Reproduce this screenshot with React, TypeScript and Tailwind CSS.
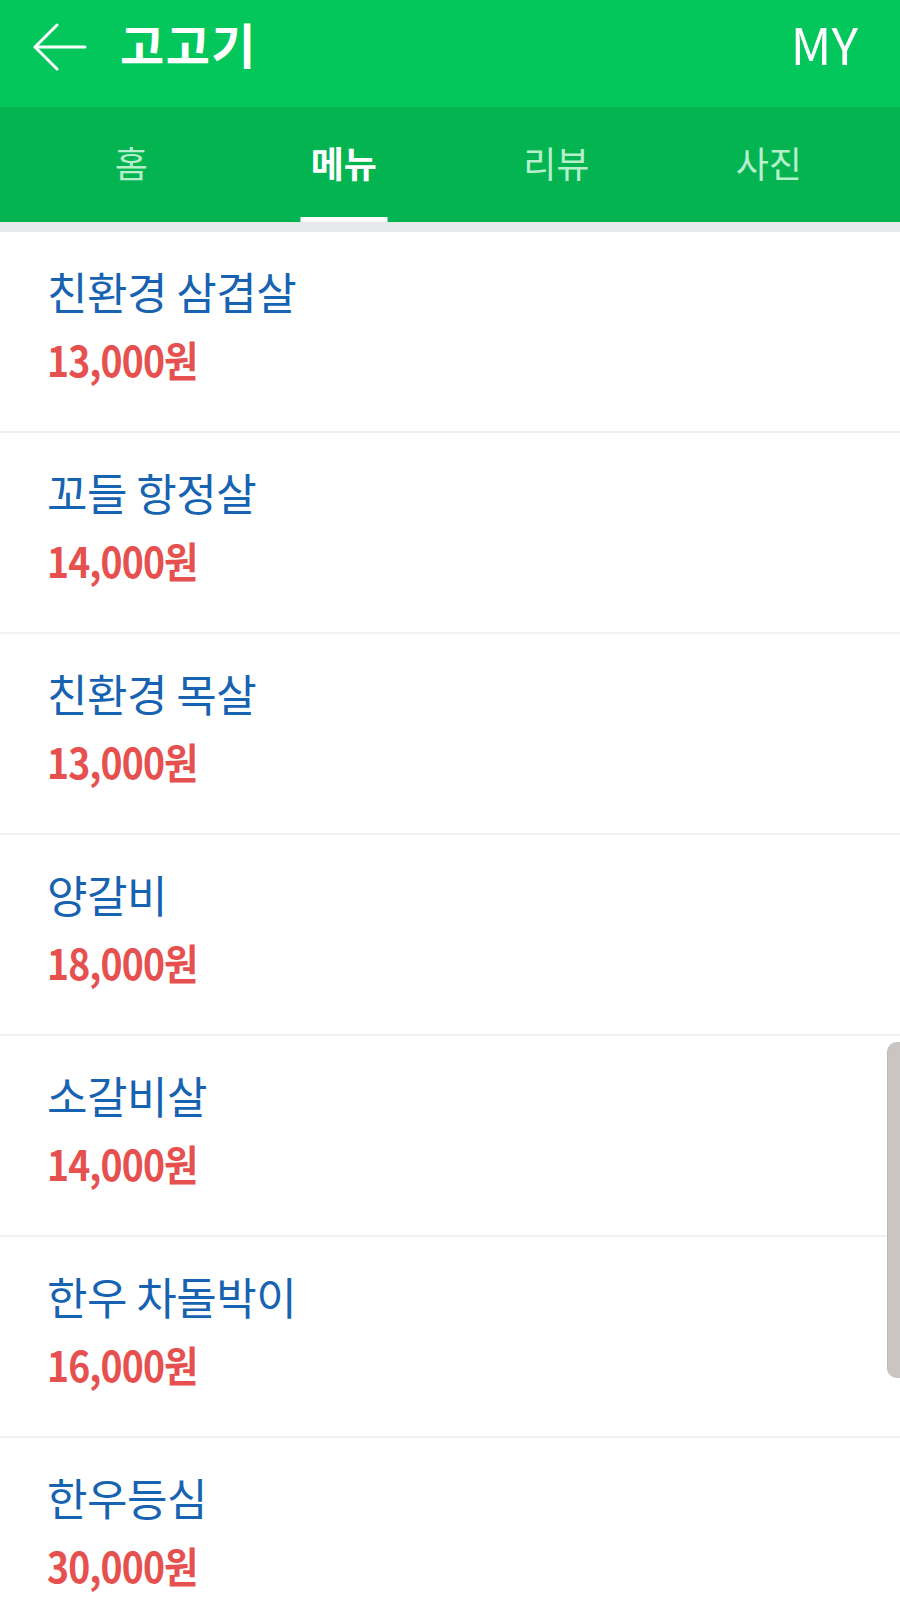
import React from "react";

const items = [
  { name: "친환경 삼겹살", price: "13,000원" },
  { name: "꼬들 항정살", price: "14,000원" },
  { name: "친환경 목살", price: "13,000원" },
  { name: "양갈비", price: "18,000원" },
  { name: "소갈비살", price: "14,000원" },
  { name: "한우 차돌박이", price: "16,000원" },
  { name: "한우등심", price: "30,000원" },
];

const font = { fontFamily: '"Noto Sans CJK KR", "Noto Sans", sans-serif' };

export default function App() {
  return (
    <div className="relative w-[900px] h-[1607px] overflow-hidden bg-white" style={font}>
      <header className="h-[107px] bg-[#03c75a] flex items-center pl-[33px] pr-[42px] pb-[22px]">
        <svg className="mt-[8px]" width="54" height="48" viewBox="0 0 54 48" fill="none" stroke="white" strokeWidth="3" strokeLinecap="round" strokeLinejoin="round">
          <path d="M52 24H3" />
          <path d="M24 2L2 24l22 22" />
        </svg>
        <div className="ml-[33px] text-white text-[48px] font-bold leading-none tracking-[1.5px]">고고기</div>
        <div className="ml-auto text-white text-[50px] font-normal leading-none">MY</div>
      </header>
      <nav className="h-[115px] bg-[#03b451] grid grid-cols-4 px-[25px]">
        {["홈", "메뉴", "리뷰", "사진"].map((t, i) => (
          <div key={t} className="relative flex items-center justify-center pb-[6px]">
            <span
              className={
                i === 1
                  ? "text-white text-[36px] font-bold leading-none"
                  : "text-[#b6efcb] text-[36px] font-normal leading-none"
              }
            >
              {t}
            </span>
            {i === 1 && <div className="absolute bottom-0 left-1/2 -translate-x-1/2 w-[87px] h-[5px] bg-white" />}
          </div>
        ))}
      </nav>
      <div className="h-[10px] bg-[#e6eaeb]" />
      <ul>
        {items.map((it) => (
          <li key={it.name} className="h-[201px] border-b-2 border-[#f1f1f1] pl-[47px] pt-[33px] flex flex-col items-start">
            <div className="text-[#1763b2] text-[44px] font-normal leading-[52px] tracking-[-0.5px]">{it.name}</div>
            <div className="mt-[18px] text-[#e6514f] text-[42px] font-bold leading-[48px] tracking-[-1px] scale-x-[0.89] origin-left">{it.price}</div>
          </li>
        ))}
      </ul>
      <div className="absolute left-[887px] top-[1042px] w-[16px] h-[336px] rounded-l-[10px] bg-[#cac5c3] border-l border-[#bdb8b6]" />
    </div>
  );
}
